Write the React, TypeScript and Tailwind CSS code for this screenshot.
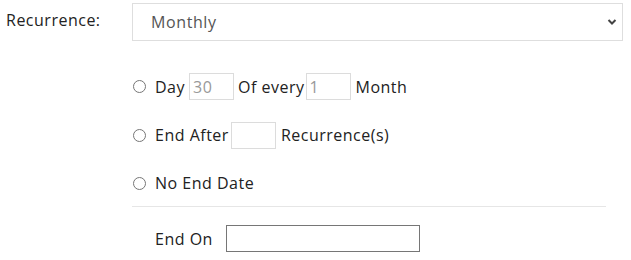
import React from 'react';

const font = { fontFamily: '"Open Sans", "Liberation Sans", sans-serif' };

const Radio = ({ name }: { name: string }) => (
  <input type="radio" name={name} className="m-0 h-[13px] w-[13px] shrink-0" />
);

const SmallInput = ({ value }: { value?: string }) => (
  <input
    type="text"
    defaultValue={value}
    className="h-[27px] w-[45px] border border-[#dcdcdc] px-[3px] text-[16px] tracking-[0.5px] text-[#999] outline-none"
    style={font}
  />
);

const App = () => {
  return (
    <div className="flex w-[631px] bg-white text-[16px] tracking-[0.5px] text-[#222]" style={font}>
      <div className="w-[132px] shrink-0 pl-[6px] pt-[8px]">Recurrence:</div>
      <div className="flex w-[491px] flex-col pt-[3px]">
        <div className="relative">
          <select
            className="h-[38px] w-full appearance-none border border-[#dedede] bg-white pl-[18px] text-[16px] tracking-[0.6px] text-[#555] outline-none"
            style={font}
            defaultValue="Monthly"
          >
            <option>Daily</option>
            <option>Weekly</option>
            <option>Monthly</option>
            <option>Yearly</option>
          </select>
          <svg
            className="pointer-events-none absolute right-[6px] top-[15px]"
            width="10"
            height="8"
            viewBox="0 0 10 8"
          >
            <path d="M1.5 2 L5 5.5 L8.5 2" fill="none" stroke="#444" strokeWidth="2" />
          </svg>
        </div>

        <div className="w-[474px] pt-[32px]">
          <div className="flex h-[27px] items-center pl-[1px]">
            <Radio name="end" />
            <span className="ml-[9px] mr-[4px]">Day</span>
            <SmallInput value="30" />
            <span className="ml-[4px] mr-[1px]">Of every</span>
            <SmallInput value="1" />
            <span className="ml-[5px]">Month</span>
          </div>

          <div className="mt-[21px] flex h-[28px] items-center pl-[1px]">
            <Radio name="end" />
            <span className="ml-[9px] mr-[2px]">End After</span>
            <SmallInput />
            <span className="ml-[5px]">Recurrence(s)</span>
          </div>

          <div className="mt-[20px] flex h-[28px] items-center pl-[1px]">
            <Radio name="end" />
            <span className="ml-[9px]">No End Date</span>
          </div>

          <div className="mt-[9px] border-t border-[#e6e6e6]" />

          <div className="mt-[18px] flex h-[27px] items-center pl-[23px]">
            <span className="mr-[13px]">End On</span>
            <input
              type="text"
              className="h-[27px] w-[194px] border border-[#767676] px-[3px] text-[15px] outline-none"
              style={font}
            />
          </div>
        </div>
      </div>
    </div>
  );
};

export default App;
